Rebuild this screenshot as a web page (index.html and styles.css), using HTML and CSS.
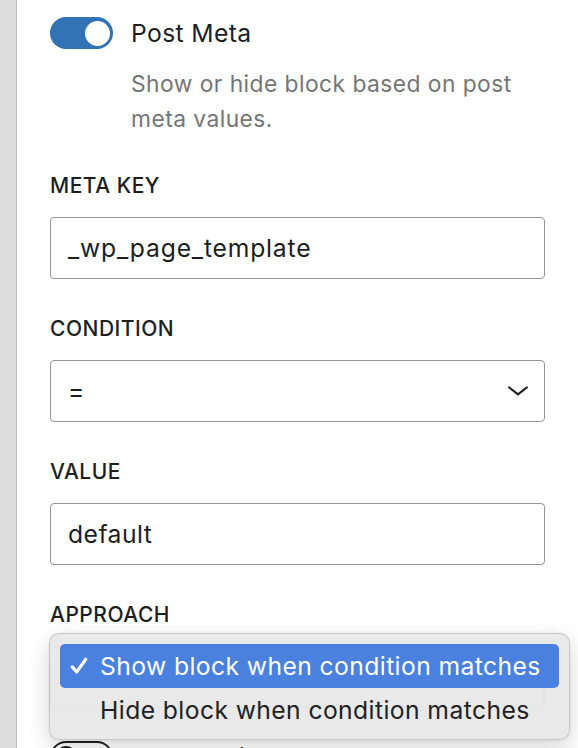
FILE: index.html
```html
<!DOCTYPE html>
<html lang="en">
<head>
<meta charset="utf-8">
<title>Post Meta</title>
<link rel="stylesheet" href="styles.css">
</head>
<body>
<div class="frame">
  <div class="gutter"></div>
  <main class="panel">
    <div class="toggle-row">
      <span class="toggle on"><span class="knob"></span></span>
      <span class="toggle-label">Post Meta</span>
    </div>
    <p class="help">Show or hide block based on post meta values.</p>

    <div class="field">
      <label class="label">Meta key</label>
      <div class="input input-key">_wp_page_template</div>
    </div>

    <div class="field">
      <label class="label">Condition</label>
      <div class="input select">
        <span>=</span>
        <svg class="chevron" viewBox="0 0 20 10" aria-hidden="true"><polyline points="1.2,1.5 10,8.3 18.8,1.5"/></svg>
      </div>
    </div>

    <div class="field">
      <label class="label">Value</label>
      <div class="input">default</div>
    </div>

    <div class="field field-last">
      <label class="label">Approach</label>
      <div class="input select focused"></div>
      <div class="menu">
        <div class="menu-item selected">
          <svg class="check" viewBox="0 0 20 20" aria-hidden="true"><polyline points="2.5,11 7.5,16.5 17.5,2.5"/></svg>
          Show block when condition matches
        </div>
        <div class="menu-item">Hide block when condition matches</div>
      </div>
    </div>

    <div class="toggle-row">
      <span class="toggle off"><span class="knob"></span></span>
      <span class="toggle-label">Screen Size</span>
    </div>
  </main>
</div>
</body>
</html>
```

FILE: styles.css
```css
html, body {
  margin: 0;
  padding: 0;
  background: #ffffff;
  height: 748px;
  overflow: hidden;
}

body {
  font-family: Inter, "Noto Sans", "Liberation Sans", sans-serif;
  color: #1e1e1e;
}

.frame {
  display: flex;
  min-height: 748px;
}

.gutter {
  flex: none;
  width: 16px;
  background: #dcdcdc;
  border-right: 1px solid #bebebe;
}

.panel {
  flex: 1;
  min-width: 0;
  padding: 17px 33px 0 33px;
}

.toggle-row {
  display: flex;
  align-items: center;
  gap: 18px;
  height: 32px;
}

.toggle {
  flex: none;
  box-sizing: border-box;
  width: 63px;
  height: 32px;
  border-radius: 16px;
  display: flex;
  align-items: center;
}

.toggle.on {
  background: #3173b5;
  justify-content: flex-end;
  padding: 0 3px;
}

.toggle.on .knob {
  width: 25px;
  height: 25px;
  border-radius: 50%;
  background: #ffffff;
}

.toggle.off {
  background: #ffffff;
  border: 2px solid #1e1e1e;
  justify-content: flex-start;
  padding: 0 3px;
}

.toggle.off .knob {
  width: 22px;
  height: 22px;
  border-radius: 50%;
  background: #1e1e1e;
}

.toggle-label {
  font-size: 24.7px;
  line-height: 32px;
  letter-spacing: 0.35px;
  color: #1e1e1e;
}

.help {
  margin: 17px 0 0 81px;
  font-size: 22.8px;
  line-height: 35px;
  letter-spacing: 0.45px;
  color: #757575;
}

.field {
  position: relative;
  margin-top: 38px;
}

.field-last {
  margin-bottom: 33px;
}

.label {
  display: block;
  font-size: 21px;
  line-height: 24px;
  font-weight: 500;
  letter-spacing: 0.5px;
  text-transform: uppercase;
  margin-bottom: 19px;
  color: #1e1e1e;
}

.input {
  box-sizing: border-box;
  height: 62px;
  border: 1px solid #949494;
  border-radius: 4px;
  padding: 0 17px;
  display: flex;
  align-items: center;
  font-size: 24.7px;
  letter-spacing: 0.45px;
  color: #1e1e1e;
  background: #ffffff;
}

.input-key {
  letter-spacing: 0.8px;
}

.select {
  justify-content: space-between;
  padding-right: 16px;
}

.chevron {
  width: 20px;
  height: 10px;
  fill: none;
  stroke: #1e1e1e;
  stroke-width: 2.2;
  stroke-linecap: round;
  stroke-linejoin: round;
}

.select.focused {
  margin-left: -1px;
  border: 2px solid #2a5aa8;
}

.menu {
  position: absolute;
  left: -1px;
  top: 30px;
  box-sizing: border-box;
  width: 521px;
  height: 107px;
  padding: 10px 10px;
  border-radius: 10px;
  background: rgba(233, 233, 233, 0.985);
  border: 1px solid rgba(0, 0, 0, 0.14);
  box-shadow: 0 8px 22px rgba(0, 0, 0, 0.16), 0 0 3px rgba(0, 0, 0, 0.08);
}

.menu-item {
  position: relative;
  height: 44px;
  border-radius: 5px;
  padding-left: 40px;
  display: flex;
  align-items: center;
  font-size: 24.7px;
  letter-spacing: 0.4px;
  color: #222222;
  white-space: nowrap;
}

.menu-item.selected {
  background: #4a80de;
  color: #ffffff;
}

.check {
  position: absolute;
  left: 10px;
  top: 13px;
  width: 18px;
  height: 18px;
  fill: none;
  stroke: #ffffff;
  stroke-width: 3.6;
  stroke-linecap: round;
  stroke-linejoin: round;
}
```
